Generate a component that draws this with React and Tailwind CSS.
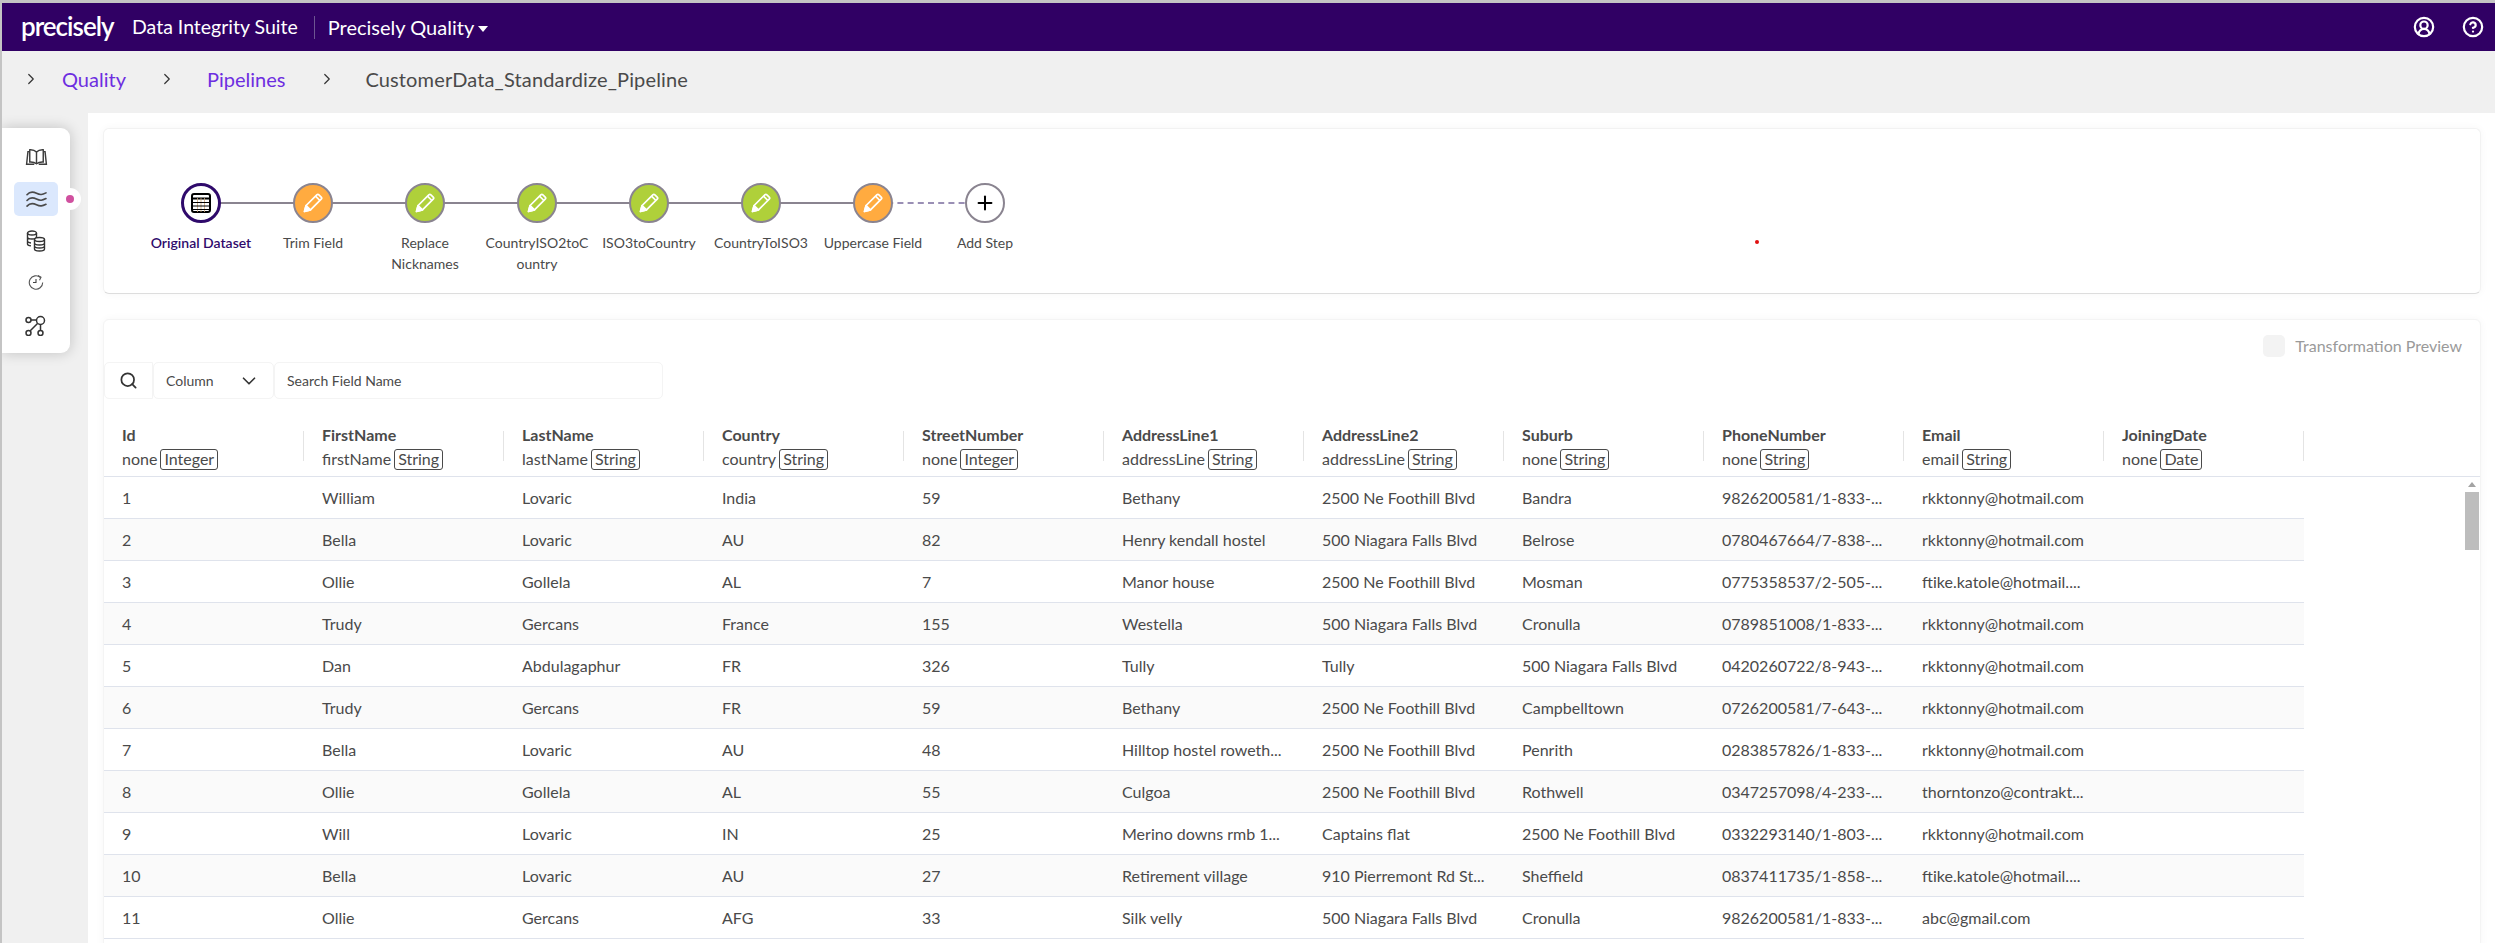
import React from "react";
import { ChevronRight, ChevronDown, Search, Plus, CircleHelp, CircleUserRound } from "lucide-react";

const columns = [
  { title: "Id", sub: "none", type: "Integer" },
  { title: "FirstName", sub: "firstName", type: "String" },
  { title: "LastName", sub: "lastName", type: "String" },
  { title: "Country", sub: "country", type: "String" },
  { title: "StreetNumber", sub: "none", type: "Integer" },
  { title: "AddressLine1", sub: "addressLine", type: "String" },
  { title: "AddressLine2", sub: "addressLine", type: "String" },
  { title: "Suburb", sub: "none", type: "String" },
  { title: "PhoneNumber", sub: "none", type: "String" },
  { title: "Email", sub: "email", type: "String" },
  { title: "JoiningDate", sub: "none", type: "Date" },
];

const foothill = "2500 Ne Foothill Blvd";
const niagara = "500 Niagara Falls Blvd";
const tonny = "rkktonny@hotmail.com";
const ftike = "ftike.katole@hotmail....";

const rows = [
  ["1", "William", "Lovaric", "India", "59", "Bethany", foothill, "Bandra", "9826200581/1-833-...", tonny, ""],
  ["2", "Bella", "Lovaric", "AU", "82", "Henry kendall hostel", niagara, "Belrose", "0780467664/7-838-...", tonny, ""],
  ["3", "Ollie", "Gollela", "AL", "7", "Manor house", foothill, "Mosman", "0775358537/2-505-...", ftike, ""],
  ["4", "Trudy", "Gercans", "France", "155", "Westella", niagara, "Cronulla", "0789851008/1-833-...", tonny, ""],
  ["5", "Dan", "Abdulagaphur", "FR", "326", "Tully", "Tully", niagara, "0420260722/8-943-...", tonny, ""],
  ["6", "Trudy", "Gercans", "FR", "59", "Bethany", foothill, "Campbelltown", "0726200581/7-643-...", tonny, ""],
  ["7", "Bella", "Lovaric", "AU", "48", "Hilltop hostel roweth...", foothill, "Penrith", "0283857826/1-833-...", tonny, ""],
  ["8", "Ollie", "Gollela", "AL", "55", "Culgoa", foothill, "Rothwell", "0347257098/4-233-...", "thorntonzo@contrakt...", ""],
  ["9", "Will", "Lovaric", "IN", "25", "Merino downs rmb 1...", "Captains flat", foothill, "0332293140/1-803-...", tonny, ""],
  ["10", "Bella", "Lovaric", "AU", "27", "Retirement village", "910 Pierremont Rd St...", "Sheffield", "0837411735/1-858-...", ftike, ""],
  ["11", "Ollie", "Gercans", "AFG", "33", "Silk velly", niagara, "Cronulla", "9826200581/1-833-...", "abc@gmail.com", ""],
];

const steps = [
  { label: "Original Dataset", kind: "source" },
  { label: "Trim Field", kind: "orange" },
  { label: "Replace Nicknames", kind: "green" },
  { label: "CountryISO2toCountry", kind: "green" },
  { label: "ISO3toCountry", kind: "green" },
  { label: "CountryToISO3", kind: "green" },
  { label: "Uppercase Field", kind: "orange" },
  { label: "Add Step", kind: "add" },
];

const BookIcon = () => (
  <svg width="23" height="18" viewBox="0 0 24 20" fill="none" stroke="#3d3d3d" strokeWidth="1.6">
    <path d="M12 4.5C10 2.5 7 1.800 4.500 2v13.500c2.700-.2 5.600.4 7.500 2 1.900-1.600 4.800-2.200 7.500-2V2C17 1.800 14 2.500 12 4.500z" />
    <path d="M12 4.500V17.500" />
    <path d="M4.500 4H2.500L1 18h8.500M19.500 4h2L23 18h-8.500" />
  </svg>
);

const WavesIcon = () => (
  <svg width="23" height="19" viewBox="0 0 24 20" fill="none" stroke="#4a4a4a" strokeWidth="1.7" strokeLinecap="round">
    <path d="M2 5c3-3.500 6-3.500 10-1.500s6 1.500 10-.5" />
    <path d="M2 11c3-3.500 6-3.500 10-1.500s6 1.500 10-.5" />
    <path d="M2 17c3-3.500 6-3.500 10-1.500s6 1.500 10-.5" />
  </svg>
);

const DatabasesIcon = () => (
  <svg width="20" height="22" viewBox="0 0 20 22" fill="none" stroke="#333" strokeWidth="1.4">
    <ellipse cx="6" cy="3" rx="4.500" ry="2" />
    <path d="M1.500 3v11c0 1 1.500 1.700 3.500 1.900M1.500 7c0 1 2 2 4.500 2s4.500-1 4.500-2M10.500 3v4M1.500 11c0 1 1.500 1.800 3.500 2" />
    <ellipse cx="13.500" cy="9.500" rx="5" ry="2" fill="#fff" />
    <path d="M8.500 9.500v9.500c0 1.100 2.200 2 5 2s5-.9 5-2V9.500M8.500 13c0 1.100 2.200 2 5 2s5-.9 5-2M8.500 16c0 1.100 2.200 2 5 2s5-.9 5-2" />
  </svg>
);

const HistoryIcon = () => (
  <svg width="16" height="16" viewBox="0 0 16 16" fill="none" stroke="#555" strokeWidth="1.1">
    <path d="M12.500 3.500A6.700 6.700 0 1 0 14.700 8.500" />
    <path d="M10 1.500l3 1.700-1.500 3" />
    <path d="M8 5v3.500H5" stroke="#444" />
  </svg>
);

const NodesIcon = () => (
  <svg width="22" height="21" viewBox="0 0 22 21" fill="none" stroke="#333" strokeWidth="1.5">
    <circle cx="3.500" cy="5" r="2.500" />
    <circle cx="15.500" cy="5.500" r="4" />
    <circle cx="3.500" cy="18" r="2.500" />
    <circle cx="15.500" cy="18" r="2.500" />
    <path d="M6 5h5.500M12.500 8.500L5 16M15.500 9.500V15.500" />
  </svg>
);

const PencilIcon = () => (
  <svg width="20" height="20" viewBox="0 0 20 20" fill="none" stroke="#fff" strokeWidth="1.7" strokeLinejoin="round">
    <path d="M1.500 18.500l1.600-6L13.800 1.800a1.500 1.500 0 0 1 2.100 0l2.300 2.300a1.500 1.500 0 0 1 0 2.100L7.500 16.900z" />
    <path d="M3.100 12.500l4.400 4.400-6 1.600z" fill="#fff" />
    <path d="M12.500 3.100l4.400 4.400" />
  </svg>
);

const TableIcon = () => (
  <svg width="20" height="20" viewBox="0 0 20 20" fill="none">
    <rect x="1" y="1" width="18" height="18" rx="2" fill="#fff" stroke="#000" strokeWidth="2" />
    <path d="M1 5.500h18" stroke="#000" strokeWidth="2" />
    <path d="M6.500 5v14M10 5v14M13.500 5v14" stroke="#c9a67a" strokeWidth="0.8" />
    <path d="M2 9.500h16M2 13h16M2 16.500h16" stroke="#000" strokeWidth="1.1" />
  </svg>
);

const StepNode = ({ step }) => {
  let circle = "bg-[#ffab40] border-2 border-[#8a8490]";
  if (step.kind === "green") circle = "bg-[#afd03a] border-2 border-[#8a8490]";
  if (step.kind === "source") circle = "bg-white border-[3px] border-[#2f0a6b]";
  if (step.kind === "add") circle = "bg-white border-2 border-[#8a8490]";
  return (
    <div className="w-[112px] flex flex-col items-center shrink-0">
      <div className={`relative z-10 w-10 h-10 rounded-full flex items-center justify-center ${circle}`}>
        {step.kind === "source" && <TableIcon />}
        {(step.kind === "green" || step.kind === "orange") && <PencilIcon />}
        {step.kind === "add" && <Plus size={22} color="#000" strokeWidth={2.2} />}
      </div>
      <div className={`mt-[9px] w-[106px] text-center text-[14px] leading-[21px] [overflow-wrap:anywhere] ${step.kind === "source" ? "text-[#2f0a6b] font-semibold whitespace-nowrap" : "text-[#4a4a4a]"}`}>
        {step.label}
      </div>
    </div>
  );
};

export default function App() {
  return (
    <div className="h-[943px] overflow-hidden flex flex-col bg-[#f0f0f0] border-t-[3px] border-l-2 border-[#c4c4c4] font-['Lato',sans-serif] text-[#4a4a4a]">
      <header className="h-[48px] shrink-0 bg-[#300064] text-white flex items-center pl-[19px] pr-[11px]">
        <span className="text-[26px] font-semibold tracking-[-1px] leading-none w-[98px] -mt-[3px]">precisely</span>
        <span className="ml-[13px] text-[19.5px]">Data Integrity Suite</span>
        <span className="ml-[16px] h-[23px] w-px bg-[#6d5591]" />
        <span className="ml-[13px] text-[20px]">Precisely Quality</span>
        <span className="ml-[4px] mt-[3px] border-x-[5px] border-t-[6px] border-x-transparent border-t-white" />
        <div className="ml-auto flex items-center gap-[27px]">
          <CircleUserRound size={22} strokeWidth={2.4} />
          <CircleHelp size={22} strokeWidth={2.4} />
        </div>
      </header>

      <nav className="h-[62px] shrink-0 flex items-center text-[20px] pl-[20px] pb-[6px]">
        <ChevronRight size={18} color="#333" strokeWidth={1.6} />
        <a className="ml-[22px] text-[#6d2ee0]">Quality</a>
        <ChevronRight size={18} color="#333" strokeWidth={1.6} className="ml-[32px]" />
        <a className="ml-[31px] text-[#6d2ee0]">Pipelines</a>
        <ChevronRight size={18} color="#333" strokeWidth={1.6} className="ml-[33px]" />
        <span className="ml-[29px] tracking-[0.15px]">CustomerData_Standardize_Pipeline</span>
      </nav>

      <div className="flex flex-1 min-h-0">
        <div className="w-[86px] shrink-0 pt-[15px]">
          <aside className="relative w-[68px] h-[225px] bg-white rounded-r-[9px] shadow-[0_0_14px_rgba(0,0,0,0.2)] flex flex-col items-center pt-[12px]">
            <div className="w-[44px] h-[34px] flex items-center justify-center"><BookIcon /></div>
            <div className="w-[44px] h-[34px] mt-[8px] flex items-center justify-center rounded-[5px] bg-[#dbe8fd]"><WavesIcon /></div>
            <div className="w-[44px] h-[34px] mt-[8px] flex items-center justify-center"><DatabasesIcon /></div>
            <div className="w-[44px] h-[34px] mt-[7px] flex items-center justify-center"><HistoryIcon /></div>
            <div className="w-[44px] h-[34px] mt-[9px] flex items-center justify-center"><NodesIcon /></div>
            <span className="absolute left-[57px] top-[60px] w-[22px] h-[22px] rounded-full bg-white flex items-center justify-center">
              <span className="w-2 h-2 rounded-full bg-[#d0509f]" />
            </span>
          </aside>
        </div>

        <main className="relative flex-1 min-w-0 bg-white pt-[15px] pl-[15px] pr-[14px]">
          <section className="relative h-[166px] rounded-[6px] bg-white border border-[#f2f2f2] border-b-[#dddddd] shadow-[0_0_8px_rgba(0,0,0,0.04)] pt-[54px] pl-[41px]">
            <div className="relative flex">
              <div className="absolute left-[56px] top-[19px] w-[672px] h-[2px] bg-[#8a8490]" />
              <div className="absolute left-[732px] top-[19px] w-[108px] border-t-2 border-dashed border-[#9a8fb5]" />
              {steps.map((s) => <StepNode key={s.label} step={s} />)}
            </div>
            <span className="absolute left-[1651px] top-[111px] w-1 h-1 rounded-full bg-[#e01010]" />
          </section>

          <section className="mt-[25px] rounded-t-[6px] bg-white border border-[#f4f4f4] shadow-[0_0_8px_rgba(0,0,0,0.04)] h-[640px]">
            <div className="h-[42px] flex items-center justify-end pt-[10px] pr-[18px]">
              <span className="w-[22px] h-[22px] rounded-[5px] bg-[#f3f3f3]" />
              <span className="ml-[10px] text-[16px] text-[#9a9a9a]">Transformation Preview</span>
            </div>
            <div className="flex h-[37px] text-[14px]">
              <div className="w-[49px] flex items-center justify-center border border-[#f4f4f4] rounded-l-[5px]"><Search size={19} color="#333" strokeWidth={2.2} /></div>
              <div className="w-[121px] flex items-center justify-between pl-[12px] pr-[13px] border border-[#f4f4f4] rounded-[5px]">
                <span>Column</span>
                <ChevronDown size={22} color="#333" strokeWidth={1.8} />
              </div>
              <div className="w-[389px] flex items-center pl-[12px] border border-[#f4f4f4] rounded-[5px]">Search Field Name</div>
            </div>

            <div className="mt-[29px] h-[49px] border-b border-[#dfe3ec] grid grid-cols-[repeat(11,200px)]">
              {columns.map((c) => (
                <div key={c.title} className="h-[30px] mt-[3px] pl-[18px] border-r border-[#e4e4e4] flex flex-col">
                  <div className="text-[16px] font-bold leading-[24px] -mt-[8px]">{c.title}</div>
                  <div className="text-[16px] leading-[24px] flex items-center whitespace-nowrap">
                    {c.sub}
                    <span className="ml-[3px] h-[21px] flex items-center px-[3px] border border-[#4a4a4a] rounded-[3px]">{c.type}</span>
                  </div>
                </div>
              ))}
            </div>

            <div className="flex">
              <div className="w-[2200px] shrink-0">
                {rows.map((r, i) => (
                  <div key={r[0]} className={`h-[42px] grid grid-cols-[repeat(11,200px)] items-center border-b border-[#dfe3ec] text-[16px] ${i % 2 === 1 ? "bg-[#fafafa]" : "bg-white"}`}>
                    {r.map((v, j) => <div key={j} className="pl-[18px] whitespace-nowrap">{v}</div>)}
                  </div>
                ))}
              </div>
              <div className="ml-auto w-[14px] mr-[1px] pt-[5px] flex flex-col items-center">
                <span className="border-x-[4px] border-b-[5px] border-x-transparent border-b-[#a3a3a3]" />
                <span className="mt-[5px] w-[14px] h-[58px] bg-[#bdbdbd]" />
              </div>
            </div>
          </section>
        </main>
      </div>
    </div>
  );
}
